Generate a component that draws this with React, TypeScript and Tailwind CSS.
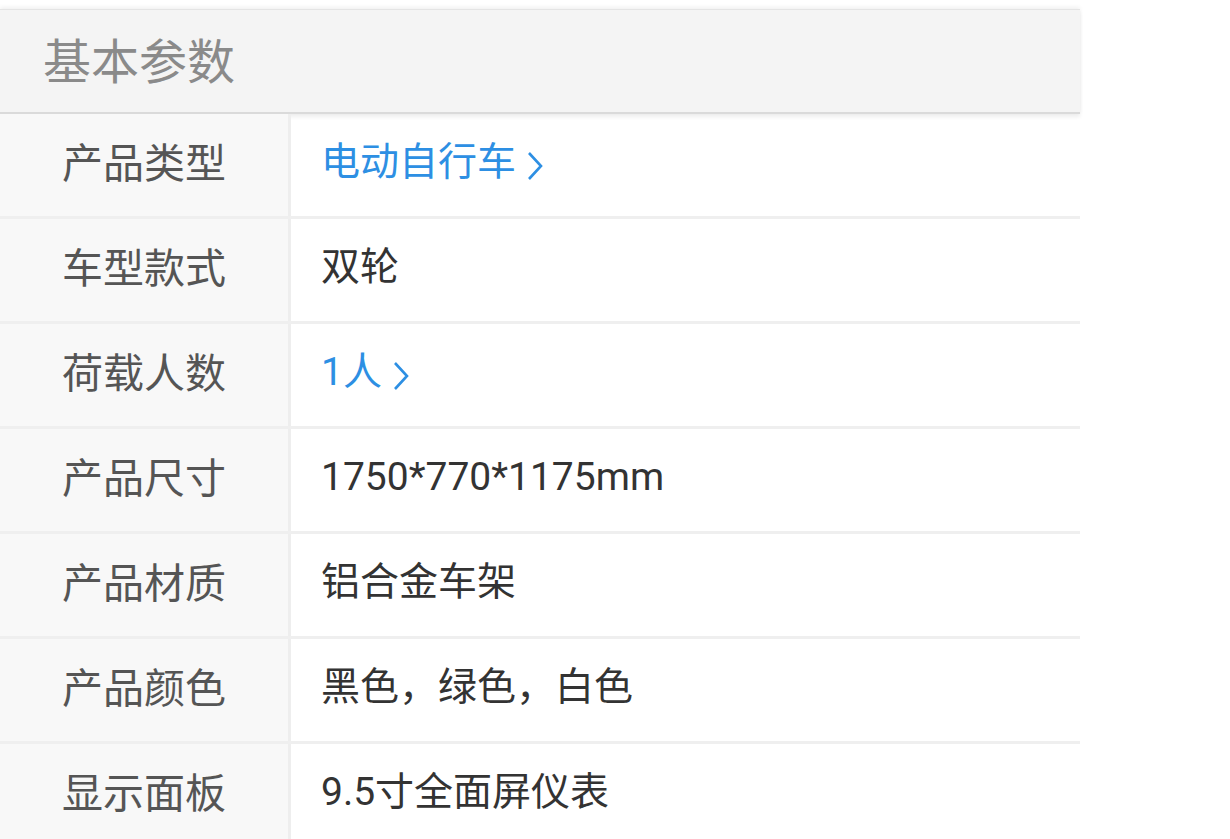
import React from "react";

type Row = {
  label: string;
  value: React.ReactNode;
  link?: boolean;
};

function Chevron() {
  return (
    <svg
      width="18"
      height="30"
      viewBox="0 0 18 30"
      className="ml-[10px] mt-[7px]"
      fill="none"
    >
      <path d="M3 2 L15 15 L3 28" stroke="#2d8fe3" strokeWidth="2.6" />
    </svg>
  );
}

const rows: Row[] = [
  { label: "产品类型", value: "电动自行车", link: true },
  { label: "车型款式", value: "双轮" },
  { label: "荷载人数", value: "1人", link: true },
  { label: "产品尺寸", value: "1750*770*1175mm" },
  { label: "产品材质", value: "铝合金车架" },
  { label: "产品颜色", value: "黑色，绿色，白色" },
  { label: "显示面板", value: "9.5寸全面屏仪表" },
];

export default function App() {
  return (
    <main className="min-h-screen bg-white font-['Roboto','Noto_Sans_CJK_SC',sans-serif]">
      <div className="w-[1080px] pt-[9px]">
        {/* header */}
        <div className="h-[105px] bg-[#f4f4f4] border-t border-[#e4e4e4] border-b-2 border-b-[#dadada] shadow-[0_-2px_4px_rgba(0,0,0,0.06),0_3px_4px_rgba(0,0,0,0.07)] flex items-center pl-[43px]">
          <span className="text-[48px] text-[#8a8a8a] font-['Noto_Sans_CJK_SC',sans-serif] leading-none -mt-[6px]">
            基本参数
          </span>
        </div>

        {rows.map((r) => (
          <div key={r.label} className="flex h-[105px] border-b-[3px] border-[#efefef]">
            <div className="w-[291px] shrink-0 bg-[#f8f8f8] border-r-[3px] border-[#eeeeee] flex items-center justify-center">
              <span className="text-[41px] text-[#555555] leading-none -mt-[10px] font-['Noto_Sans_CJK_SC',sans-serif]">
                {r.label}
              </span>
            </div>
            <div
              className={`flex items-center pl-[30px] text-[39px] leading-none -mt-[5px] ${
                r.link ? "text-[#2d8fe3]" : "text-[#333333]"
              }`}
            >
              <span>{r.value}</span>
              {r.link && <Chevron />}
            </div>
          </div>
        ))}
      </div>
    </main>
  );
}
